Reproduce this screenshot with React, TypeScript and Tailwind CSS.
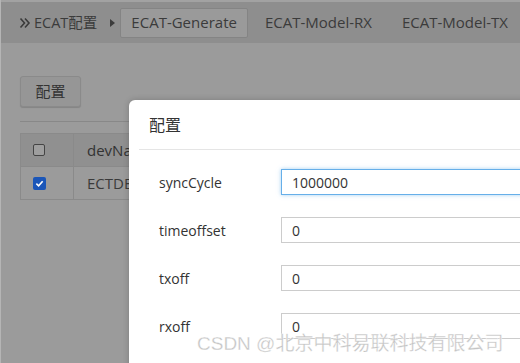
import React from "react";

const font = { fontFamily: '"Open Sans","Noto Sans CJK SC",sans-serif' };

function Row({ label, value, focus, top }: { label: string; value: string; focus?: boolean; top: string }) {
  return (
    <div className={`flex items-center ${top}`}>
      <div className="w-[152px] pl-[30px] text-[14px] text-[#333]">{label}</div>
      <div
        className={`h-[26px] flex-1 flex items-center pl-[10px] text-[14px] text-[#333] border ${
          focus ? "border-[#66afe9] shadow-[0_0_4px_rgba(102,175,233,0.6)]" : "border-[#ccc]"
        }`}
      >
        {value}
      </div>
    </div>
  );
}

export default function App() {
  return (
    <div className="relative w-[520px] h-[363px] overflow-hidden bg-[#9b9b9b] border-l border-[#b5b5b5]" style={font}>
      {/* top bar */}
      <div className="h-[43px] bg-[#8e8e8e] flex items-center text-[15px] text-[#3b3b3b] border-t-[2px] border-[#a2a2a2]">
        <svg className="ml-[18px] mr-[3px]" width="12" height="12" viewBox="0 0 12 12">
          <path d="M1.5 1.5 L5.5 6 L1.5 10.5 M6 1.5 L10 6 L6 10.5" stroke="#3b3b3b" strokeWidth="1.6" fill="none" />
        </svg>
        <span className="text-[14.5px]">ECAT配置</span>
        <span className="ml-[13px] mr-[5px] w-0 h-0 border-y-[4px] border-y-transparent border-l-[5px] border-l-[#3b3b3b]" />
        <div className="h-[30px] px-[10px] flex items-center border border-[#848484] bg-[#9a9a9a] rounded-[2px]">ECAT-Generate</div>
        <div className="ml-[17px]">ECAT-Model-RX</div>
        <div className="ml-[30px]">ECAT-Model-TX</div>
      </div>
      {/* content */}
      <div className="px-[19px] pt-[33px]">
        <div className="w-[61px] h-[31px] flex items-center justify-center rounded-[3px] border border-[#8a8a8a] bg-[#969696] text-[15px] text-[#333] shadow-[0_1px_1px_rgba(0,0,0,0.15)]">
          配置
        </div>
        <div className="mt-[14px] h-px bg-[#888]" />
        <div className="mt-[11px] border-l border-t border-[#8a8a8a]">
          <div className="flex h-[33px] bg-[#909090] border-b border-[#8a8a8a]">
            <div className="w-[53px] border-r border-[#8a8a8a] flex items-center pl-[12px]">
              <div className="w-[12px] h-[12px] rounded-[2px] border border-[#444] bg-[#9e9e9e]" />
            </div>
            <div className="flex items-center pl-[13px] text-[15px] text-[#333]">devName</div>
          </div>
          <div className="flex h-[33px] border-b border-[#8a8a8a]">
            <div className="w-[53px] border-r border-[#8a8a8a] flex items-center pl-[12px]">
              <div className="w-[13px] h-[13px] rounded-[2px] bg-[#1b56b8] flex items-center justify-center">
                <svg width="9" height="9" viewBox="0 0 10 10">
                  <path d="M1.5 5.2 L4 7.5 L8.5 2.5" stroke="white" strokeWidth="1.8" fill="none" />
                </svg>
              </div>
            </div>
            <div className="flex items-center pl-[13px] text-[15px] text-[#3a3a3a]">ECTDEV1</div>
          </div>
        </div>
      </div>
      {/* modal */}
      <div className="absolute left-[128px] top-[100px] w-[420px] h-[300px] bg-white rounded-tl-[6px] shadow-[0_0_6px_rgba(0,0,0,0.2)]">
        <div className="h-[49px] pl-[20px] flex items-center text-[16px] text-[#333]">配置</div>
        <div className="ml-[10px] h-px bg-[#e5e5e5]" />
        <Row label="syncCycle" value="1000000" focus top="mt-[19px]" />
        <Row label="timeoffset" value="0" top="mt-[22px]" />
        <Row label="txoff" value="0" top="mt-[22px]" />
        <Row label="rxoff" value="0" top="mt-[22px]" />
      </div>
      {/* watermark */}
      <div
        className="absolute left-[196px] top-[330px] text-[19px] text-[#c4c4c4] whitespace-nowrap"
        style={{ fontFamily: '"Liberation Sans","Noto Sans CJK SC",sans-serif', WebkitTextStroke: "0.3px #fff", textShadow: "0 0 1px #fff" }}
      >
        CSDN @北京中科易联科技有限公司
      </div>
    </div>
  );
}
